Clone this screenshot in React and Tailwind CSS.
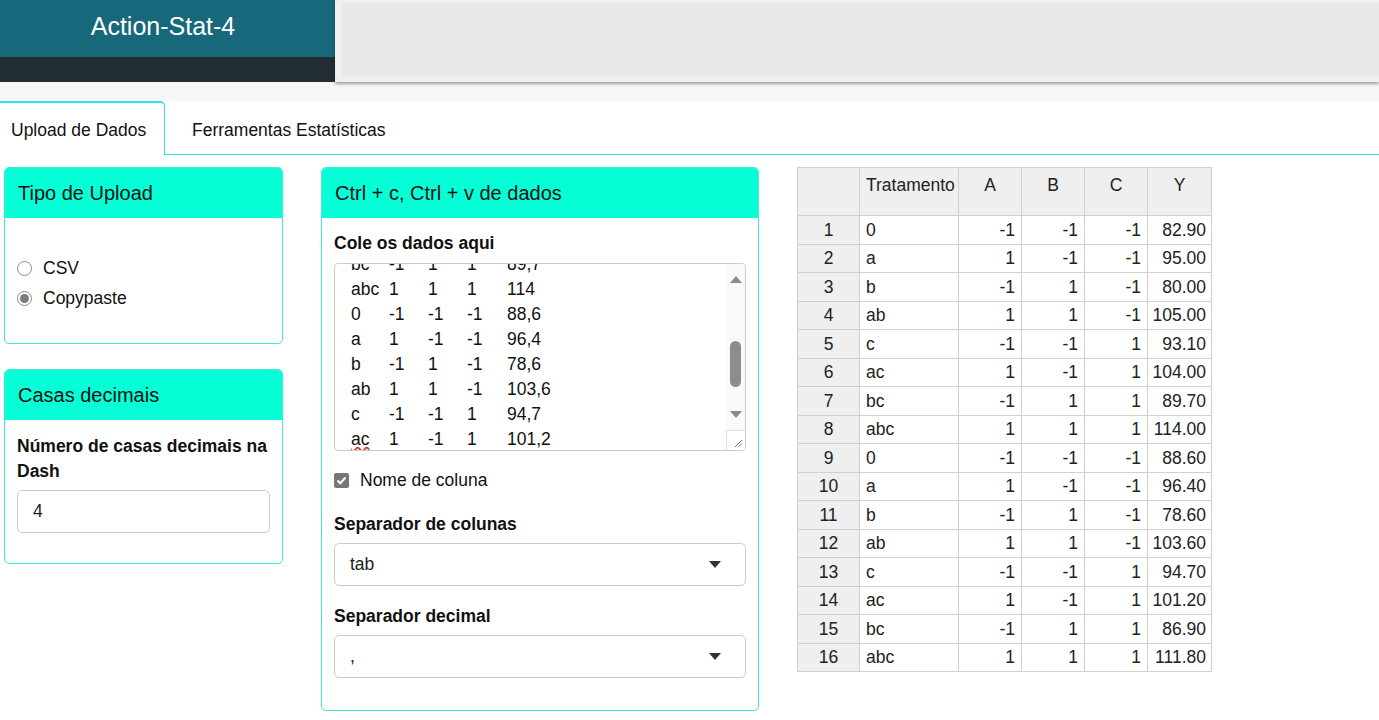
import React from 'react';

const font = "font-['Liberation_Sans',Arial,sans-serif]";

const rows = [
    ['0', -1, -1, -1, '82.90'],
    ['a', 1, -1, -1, '95.00'],
    ['b', -1, 1, -1, '80.00'],
    ['ab', 1, 1, -1, '105.00'],
    ['c', -1, -1, 1, '93.10'],
    ['ac', 1, -1, 1, '104.00'],
    ['bc', -1, 1, 1, '89.70'],
    ['abc', 1, 1, 1, '114.00'],
    ['0', -1, -1, -1, '88.60'],
    ['a', 1, -1, -1, '96.40'],
    ['b', -1, 1, -1, '78.60'],
    ['ab', 1, 1, -1, '103.60'],
    ['c', -1, -1, 1, '94.70'],
    ['ac', 1, -1, 1, '101.20'],
    ['bc', -1, 1, 1, '86.90'],
    ['abc', 1, 1, 1, '111.80'],
];

// linhas visiveis do textarea (rolado)
const pasted = [
    ['bc', '-1', '1', '1', '89,7'],
    ['abc', '1', '1', '1', '114'],
    ['0', '-1', '-1', '-1', '88,6'],
    ['a', '1', '-1', '-1', '96,4'],
    ['b', '-1', '1', '-1', '78,6'],
    ['ab', '1', '1', '-1', '103,6'],
    ['c', '-1', '-1', '1', '94,7'],
    ['ac', '1', '-1', '1', '101,2'],
];

function Box({ title, className = '', children }) {
    return (
        <div className={`border border-[#3de9d5] rounded-[5px] bg-white overflow-hidden ${className}`}>
            <div className="bg-[#06ffd6] h-[50px] flex items-center px-[13px] text-[20px] text-[#111]">
                {title}
            </div>
            {children}
        </div>
    );
}

function Caret() {
    return (
        <svg width="12" height="7" viewBox="0 0 12 7" className="shrink-0">
            <path d="M0 0 L12 0 L6 7 Z" fill="#333" />
        </svg>
    );
}

function SelectBox({ value }) {
    return (
        <div className="h-[43px] border border-[#cccccc] rounded-[5px] flex items-center justify-between pl-[15px] pr-[24px] text-[17.5px] text-[#222]">
            <span>{value}</span>
            <Caret />
        </div>
    );
}

export default function App() {
    return (
        <div className={`${font} min-h-screen bg-white text-[#111]`}>
            {/* --- HEADER --- */}
            <div className="flex h-[82px]">
                <div className="w-[335px] flex flex-col">
                    <div className="h-[57px] bg-[#17687b] flex items-center justify-center text-white text-[25px] pb-[4px] pr-[9px]">
                        Action-Stat-4
                    </div>
                    <div className="flex-1 bg-[#222d32]" />
                </div>
                <div className="flex-1 bg-[#efefef] pt-[3px] pl-[7px] pb-[7px] shadow-[0_2px_3px_rgba(0,0,0,0.35)]">
                    <div className="h-full bg-[#e8e8e8]" />
                </div>
            </div>
            <div className="h-[19px] bg-[#f7f7f7]" />

            {/* --- TABS --- */}
            <div className="flex h-[54px] text-[17.5px]">
                <div className="w-[165px] border-t-2 border-r border-[#33e1ea] rounded-tr-[5px] flex items-center pl-[11px] pt-[3px] bg-white">
                    Upload de Dados
                </div>
                <div className="flex-1 border-b border-[#33e1ea] flex items-center pl-[27px] pt-[5px]">
                    Ferramentas Estatísticas
                </div>
            </div>

            {/* --- CONTENT --- */}
            <div className="flex items-start pt-[12px] pl-[4px]">
                {/* coluna esquerda */}
                <div className="w-[279px] flex flex-col gap-[25px]">
                    <Box title="Tipo de Upload" className="h-[177px]">
                        <div className="pl-[12px] pt-[41px] flex flex-col gap-[12px] text-[17.5px]">
                            <div className="flex items-center gap-[11px] h-[18px]">
                                <span className="w-[15px] h-[15px] rounded-full border border-[#8a8a8a] bg-white" />
                                <span>CSV</span>
                            </div>
                            <div className="flex items-center gap-[11px] h-[18px]">
                                <span className="w-[15px] h-[15px] rounded-full border border-[#8a8a8a] bg-white flex items-center justify-center">
                                    <span className="w-[9px] h-[9px] rounded-full bg-[#7b7b7b]" />
                                </span>
                                <span>Copypaste</span>
                            </div>
                        </div>
                    </Box>
                    <Box title="Casas decimais" className="h-[195px]">
                        <div className="px-[12px] pt-[14px]">
                            <div className="font-bold text-[17.5px] leading-[25px]">Número de casas decimais na Dash</div>
                            <div className="mt-[6px] h-[43px] border border-[#cccccc] rounded-[5px] flex items-center pl-[15px] text-[17.5px] text-[#222]">
                                4
                            </div>
                        </div>
                    </Box>
                </div>

                {/* coluna do meio */}
                <Box title="Ctrl + c, Ctrl + v de dados" className="w-[438px] h-[544px] ml-[38px]">
                    <div className="px-[12px] pt-[13px]">
                        <div className="font-bold text-[17.5px] leading-[25px]">Cole os dados aqui</div>
                        <div className="relative mt-[7px] h-[188px] border border-[#cccccc] rounded-[4px] overflow-hidden">
                            <div className="pl-[16px] -mt-[12px] text-[17.5px] leading-[25px] whitespace-pre">
                                {pasted.map((r, i) => (
                                    <div key={i} className="flex">
                                        <span className="w-[38px]">
                                            {i === pasted.length - 1
                                                ? <span className="underline decoration-wavy decoration-[#e03030] underline-offset-[1px]">{r[0]}</span>
                                                : r[0]}
                                        </span>
                                        <span className="w-[39px]">{r[1]}</span>
                                        <span className="w-[39px]">{r[2]}</span>
                                        <span className="w-[40px]">{r[3]}</span>
                                        <span>{r[4]}</span>
                                    </div>
                                ))}
                            </div>
                            {/* scrollbar */}
                            <div className="absolute top-0 right-0 w-[19px] h-full bg-[#f9f9f9] flex flex-col items-center">
                                <svg width="12" height="7" viewBox="0 0 12 7" className="mt-[12px]">
                                    <path d="M6 0 L12 7 L0 7 Z" fill="#8a8a8a" />
                                </svg>
                                <div className="mt-[58px] w-[11px] h-[46px] rounded-full bg-[#8c8c8c]" />
                                <svg width="12" height="7" viewBox="0 0 12 7" className="mt-[24px]">
                                    <path d="M0 0 L12 0 L6 7 Z" fill="#8a8a8a" />
                                </svg>
                                <div className="mt-auto w-[19px] h-[20px] border-t border-l border-[#dddddd] bg-white flex items-end justify-end p-[2px]">
                                    <svg width="9" height="9" viewBox="0 0 9 9">
                                        <path d="M1 8 L8 1 M4.5 8 L8 4.5" stroke="#777" strokeWidth="1" />
                                    </svg>
                                </div>
                            </div>
                        </div>

                        <div className="flex items-center gap-[11px] mt-[20px] text-[17.5px] h-[18px]">
                            <span className="w-[15px] h-[15px] rounded-[2px] bg-[#777777] flex items-center justify-center">
                                <svg width="11" height="9" viewBox="0 0 11 9">
                                    <path d="M1.5 4.5 L4.2 7.2 L9.5 1.5" stroke="white" strokeWidth="2" fill="none" />
                                </svg>
                            </span>
                            <span>Nome de coluna</span>
                        </div>

                        <div className="font-bold text-[17.5px] leading-[25px] mt-[23px]">Separador de colunas</div>
                        <div className="mt-[6px]"><SelectBox value="tab" /></div>

                        <div className="font-bold text-[17.5px] leading-[25px] mt-[18px]">Separador decimal</div>
                        <div className="mt-[6px]"><SelectBox value="," /></div>
                    </div>
                </Box>

                {/* tabela */}
                <table className="ml-[38px] border-collapse text-[17.5px] text-[#222]">
                    <thead>
                        <tr className="h-[48px] bg-[#efefef]">
                            <th className="w-[62px] border border-[#d0d0d0] font-normal" />
                            <th className="w-[99px] border border-[#d0d0d0] font-normal text-left align-top pt-[4px] pl-[6px]">Tratamento</th>
                            <th className="w-[63px] border border-[#d0d0d0] font-normal align-top pt-[4px]">A</th>
                            <th className="w-[63px] border border-[#d0d0d0] font-normal align-top pt-[4px]">B</th>
                            <th className="w-[63px] border border-[#d0d0d0] font-normal align-top pt-[4px]">C</th>
                            <th className="w-[64px] border border-[#d0d0d0] font-normal align-top pt-[4px]">Y</th>
                        </tr>
                    </thead>
                    <tbody>
                        {rows.map((r, i) => (
                            <tr key={i} className="h-[28.5px]">
                                <td className="border border-[#d0d0d0] bg-[#efefef] text-center p-0">{i + 1}</td>
                                <td className="border border-[#d0d0d0] pl-[6px] py-0">{r[0]}</td>
                                <td className="border border-[#d0d0d0] text-right pr-[6px] py-0">{r[1]}</td>
                                <td className="border border-[#d0d0d0] text-right pr-[6px] py-0">{r[2]}</td>
                                <td className="border border-[#d0d0d0] text-right pr-[6px] py-0">{r[3]}</td>
                                <td className="border border-[#d0d0d0] text-right pr-[5px] py-0">{r[4]}</td>
                            </tr>
                        ))}
                    </tbody>
                </table>
            </div>
        </div>
    );
}
